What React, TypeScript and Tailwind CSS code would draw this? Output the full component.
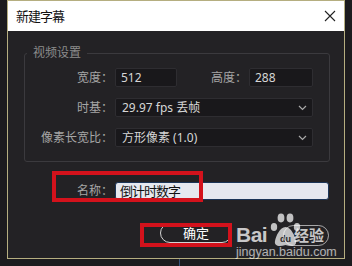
import React from 'react';

const font = { fontFamily: '"Noto Sans", "Noto Sans CJK SC", sans-serif' };

function Chevron() {
  return (
    <svg width="9" height="6" viewBox="0 0 9 6" className="mr-[5px]">
      <polyline points="1,1 4.5,4.5 8,1" fill="none" stroke="#a9a9a9" strokeWidth="1.2" />
    </svg>
  );
}

function Field({ value, width }: { value: string; width: string }) {
  return (
    <div className={`ml-[2px] h-[19px] ${width} flex items-center rounded-[2px] border border-[#2e2d31] bg-[#19181b] pl-[5px] text-[12px] leading-none text-[#d6d6d6]`}>
      {value}
    </div>
  );
}

function Select({ value }: { value: string }) {
  return (
    <div className="ml-[2px] h-[19px] w-[198px] flex items-center justify-between rounded-[2px] border border-[#2e2d31] bg-[#19181b] pl-[6px] text-[12px] leading-none text-[#d6d6d6]">
      <span>{value}</span>
      <Chevron />
    </div>
  );
}

function Watermark() {
  return (
    <div className="absolute left-[236px] top-[212px] w-[96px] h-[50px] text-white/80 pointer-events-none">
      <div className="absolute left-0 top-[12px] text-[21px] font-bold leading-none tracking-[-0.5px] text-white/75" style={{ fontFamily: '"Liberation Sans", sans-serif' }}>
        Bai
      </div>
      <svg className="absolute left-[34px] top-0" width="32" height="36" viewBox="0 0 32 36">
        <g fill="rgba(255,255,255,0.72)">
          <ellipse cx="4" cy="15" rx="3.2" ry="4" />
          <ellipse cx="11" cy="6" rx="3.4" ry="4.4" />
          <ellipse cx="20" cy="6" rx="3.4" ry="4.4" />
          <ellipse cx="27" cy="15" rx="3.2" ry="4" />
          <path d="M15.5 15 C10 15 6 24 5 29 C4 34 9 35 15.5 33 C22 35 27 34 26 29 C25 24 21 15 15.5 15 Z" />
        </g>
        <text x="15.5" y="30" textAnchor="middle" fontSize="9" fontWeight="bold" fill="#2a292c" fontFamily="Liberation Sans, sans-serif">du</text>
      </svg>
      <div className="absolute left-[47px] top-[13px] h-[21px] w-[46px] rounded-full border border-white/60 flex items-center justify-end pr-[4px] text-[15px] font-bold leading-none text-white/75" style={font}>
        经验
      </div>
      <div className="absolute left-0 top-[34px] text-[12.5px] leading-none text-white/65" style={{ fontFamily: '"Liberation Sans", sans-serif' }}>
        jingyan.baidu.com
      </div>
    </div>
  );
}

export default function App() {
  return (
    <div className="relative w-[352px] h-[266px] overflow-hidden bg-[#1c1b1e]" style={font}>
      <div className="ml-[7px] w-[338px] h-[259px] border border-[#b5ae80] bg-[#232225] flex flex-col">
        <div className="h-[30px] bg-white flex items-center justify-between pl-[8px] pr-[8px]">
          <span className="text-[13px] leading-none tracking-[-1px] text-[#111]">新建字幕</span>
          <svg width="12" height="12" viewBox="0 0 12 12">
            <path d="M1 1 L11 11 M11 1 L1 11" stroke="#222" strokeWidth="1.1" />
          </svg>
        </div>

        <div className="flex-1 pt-[14px]">
          <fieldset className="ml-[16px] w-[306px] rounded-[3px] border border-[#3b3a3e] pl-[2px] pt-[7px] pb-[14px]">
            <legend className="px-[6px] text-[12px] leading-[16px] text-[#8c8c8c]">视频设置</legend>
            <div className="flex flex-col gap-[11px] text-[12px] text-[#a6a6a6]">
              <div className="flex items-center">
                <span className="w-[86px] text-right leading-none">宽度：</span>
                <Field value="512" width="w-[62px]" />
                <span className="w-[70px] text-right leading-none">高度：</span>
                <Field value="288" width="w-[64px]" />
              </div>
              <div className="flex items-center">
                <span className="w-[86px] text-right leading-none">时基：</span>
                <Select value="29.97 fps 丢帧" />
              </div>
              <div className="flex items-center">
                <span className="w-[86px] text-right leading-none">像素长宽比：</span>
                <Select value="方形像素 (1.0)" />
              </div>
            </div>
          </fieldset>

          <div className="mt-[20px] flex items-center text-[12px]">
            <span className="w-[105px] text-right leading-none text-[#a6a6a6]">名称：</span>
            <div className="ml-[2px] h-[18px] w-[214px] flex items-center rounded-[3px] border border-[#1c3558] bg-[#e6e8ef] pl-[4px] text-[13px] leading-none tracking-[-1px] text-[#111]">
              倒计时数字
            </div>
          </div>

          <div className="mt-[23px] ml-[152px] h-[20px] w-[72px] flex items-center justify-center rounded-full border border-[#d4d4d4] text-[13px] leading-none text-white">
            确定
          </div>
        </div>
      </div>
      <div className="ml-[179px] h-[7px] w-px bg-[#35507a]" />

      <div className="absolute left-[52px] top-[171px] h-[31px] w-[151px] border-[4px] border-[#d3121c]" />
      <div className="absolute left-[140px] top-[223px] h-[24px] w-[92px] border-[4px] border-[#d3121c]" />
      <Watermark />
    </div>
  );
}
